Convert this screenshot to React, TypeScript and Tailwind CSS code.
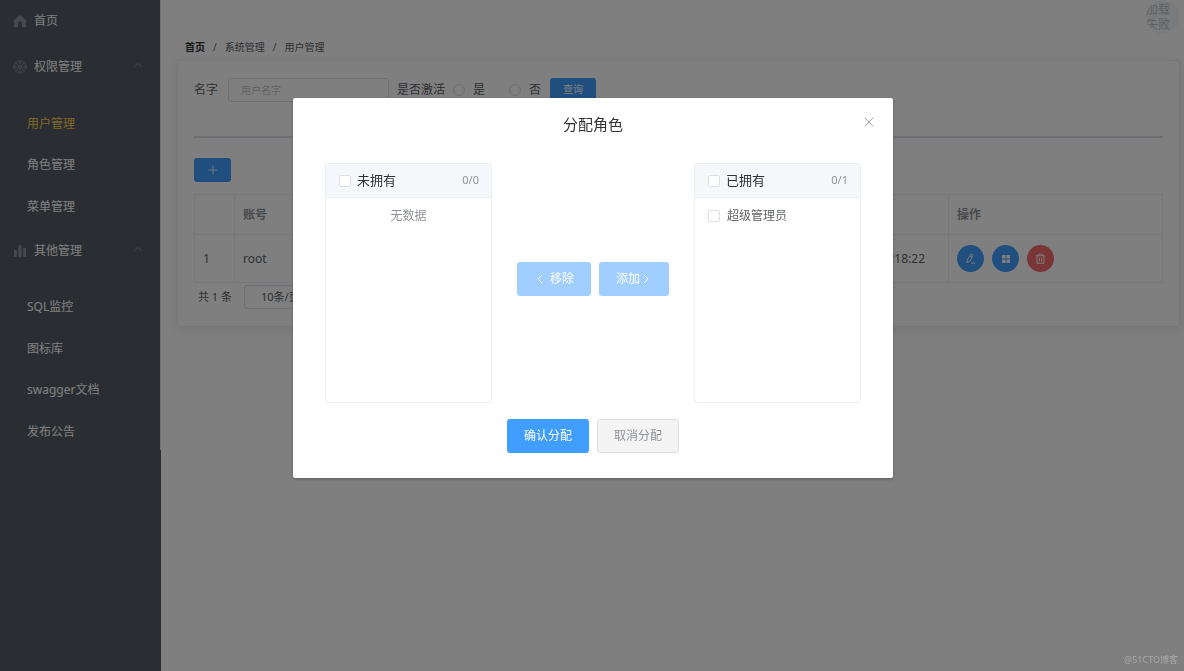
import React from "react";

const Home = () => (
  <svg viewBox="0 0 14 14" className="size-3.5 text-[#909399]" fill="currentColor">
    <path d="M7 1 1 6.2V12.5a.5.5 0 0 0 .5.5H5V9.2a2 2 0 0 1 4 0V13h3.500a.5.5 0 0 0 .5-.5V6.200z" />
  </svg>
);

const Wheel = () => (
  <svg viewBox="0 0 14 14" className="size-3.5 text-[#909399]" fill="none" stroke="currentColor" strokeWidth=".7">
    <circle cx="7" cy="7" r="6.300" />
    <circle cx="7" cy="7" r="4.800" strokeWidth=".4" />
    <circle cx="7" cy="7" r="1.300" />
    <path d="M7 .7v4.900M7 8.400v4.900M.7 7h4.900M8.400 7h4.900M2.500 2.500 6 6M8 8l3.500 3.500M11.500 2.500 8 6M6 8l-3.500 3.500" />
  </svg>
);

const Bars = () => (
  <svg viewBox="0 0 14 14" className="size-3.5 text-[#909399]" fill="currentColor">
    <path d="M1 6h2.800v7H1zM5.500 1.500h3V13h-3zM10.200 4H13v9h-2.800z" />
  </svg>
);

const Chevron = ({ d, className }: { d: string; className: string }) => (
  <svg viewBox="0 0 12 12" className={className} fill="none" stroke="currentColor" strokeLinecap="round" strokeLinejoin="round">
    <path d={d} />
  </svg>
);

function MenuGroup({ icon, title, items, active, listClass }: {
  icon: React.ReactNode; title: string; items: string[]; active?: string; listClass: string;
}) {
  return (
    <li>
      <button type="button" className="flex h-[46px] w-full items-center pl-[13px] pr-[17px]">
        {icon}
        <span className="ml-[7px] flex-1 text-left">{title}</span>
        <Chevron d="M2 8l4-4 4 4" className="mb-1 size-[10px] text-[#909399]" />
      </button>
      <ul className={listClass}>
        {items.map((t) => (
          <li key={t} className="flex items-center">
            <a href="#" className={t === active ? "pl-[27px] text-[#ffd04b]" : "pl-[27px]"}>{t}</a>
          </li>
        ))}
      </ul>
    </li>
  );
}

const boxClass = "size-3 shrink-0 appearance-none rounded-xs border border-[#dcdfe6] bg-white";
const radioClass = "size-3 shrink-0 appearance-none rounded-full border border-[#dcdfe6] bg-white";

function Panel({ id, title, count, children }: { id: string; title: string; count: string; children: React.ReactNode }) {
  return (
    <section className="h-60 w-[167px] overflow-hidden rounded-[3px] border border-[#ebeef5]">
      <header className="flex h-[34px] items-center border-b border-[#ebeef5] bg-[#f5f7fa] px-3">
        <input id={id} type="checkbox" className={boxClass + " ml-px"} />
        <label htmlFor={id} className="ml-1.5 flex-1 text-[13px] text-[#303133]">{title}</label>
        <span className="text-[11px] text-[#909399]">{count}</span>
      </header>
      {children}
    </section>
  );
}

const roundBtn = "flex size-[27px] items-center justify-center rounded-full text-white";

export default function App() {
  return (
    <div className="flex min-h-screen bg-white font-['Noto_Sans','Noto_Sans_CJK_SC',sans-serif] text-xs text-[#606266]">
      <aside className="w-[161px] shrink-0 bg-[#545c64] text-white">
        <ul className="h-[450px] border-r border-[#e6e6e6] pt-px">
          <li>
            <a href="#" className="flex h-[43px] items-center pb-[3px] pl-[13px]">
              <Home />
              <span className="ml-[7px]">首页</span>
            </a>
          </li>
          <MenuGroup icon={<Wheel />} title="权限管理" items={["用户管理", "角色管理", "菜单管理"]} active="用户管理" listClass="mt-[13px] grid h-[125px] grid-rows-3" />
          <MenuGroup icon={<Bars />} title="其他管理" items={["SQL监控", "图标库", "swagger文档", "发布公告"]} listClass="mt-3 grid h-[167px] grid-rows-4" />
        </ul>
      </aside>

      <div className="flex min-w-0 flex-1 flex-col pl-4 pr-1">
        <div className="flex h-[35px] justify-end">
          <div className="flex size-[34px] items-center overflow-hidden rounded-full bg-[#f5f7fa] leading-[15px] text-[#c0c4cc]">
            <span className="w-6">加载失败</span>
          </div>
        </div>
        <nav className="flex h-[25px] gap-2 pl-2 text-[10px] leading-6">
          <a href="#" className="font-bold text-[#303133]">首页</a>
          <span>/</span>
          <a href="#">系统管理</a>
          <span>/</span>
          <span>用户管理</span>
        </nav>

        <main className="rounded-[3px] border border-[#ebeef5] bg-white px-4 pb-[17px] pt-[17px] shadow-[0_2px_12px_rgba(0,0,0,0.1)]">
          <form className="flex h-6 items-center">
            <label htmlFor="name">名字</label>
            <input id="name" placeholder="用户名字" className="ml-[10px] h-6 w-[161px] rounded-[3px] border border-[#dcdfe6] px-3 text-[10px] placeholder:text-[#c0c4cc]" />
            <span className="ml-2">是否激活</span>
            <input id="yes" type="radio" name="on" className={radioClass + " ml-2"} />
            <label htmlFor="yes" className="ml-2">是</label>
            <input id="no" type="radio" name="on" className={radioClass + " ml-6"} />
            <label htmlFor="no" className="ml-2">否</label>
            <button type="button" className="ml-[9px] h-6 rounded-[3px] bg-[#409eff] px-[13px] text-[10px] text-white">查询</button>
          </form>
          <hr className="mt-[34px] border-t-2 border-[#dcdfe6]" />
          <button type="button" aria-label="新增" className="mt-5 flex h-6 w-[37px] items-center justify-center rounded-[3px] bg-[#409eff] text-white">
            <Chevron d="M6 1v10M1 6h10" className="size-[10px]" />
          </button>
          <table className="mt-3 w-full table-fixed border-collapse text-left [&_td]:border [&_td]:border-[#ebeef5] [&_td]:px-2 [&_th]:border [&_th]:border-[#ebeef5] [&_th]:px-2">
            <colgroup>
              <col className="w-10" />
              <col />
              <col className="w-[214px]" />
            </colgroup>
            <thead>
              <tr className="h-10 text-[#909399]">
                <th />
                <th>账号</th>
                <th>操作</th>
              </tr>
            </thead>
            <tbody>
              <tr className="h-12">
                <td>1</td>
                <td>
                  <div className="flex justify-between pr-[15px]">
                    <span>root</span>
                    <span>:18:22</span>
                  </div>
                </td>
                <td>
                  <div className="flex gap-2">
                    <button type="button" aria-label="编辑" className={roundBtn + " bg-[#409eff]"}>
                      <svg viewBox="0 0 12 12" className="size-[11px]" fill="none" stroke="currentColor" strokeLinejoin="round">
                        <path d="M6.500 1.200 9 2.700 5 9.200 2.200 10.500 2.400 7.700zM5.300 3.200l2.500 1.500M6.500 11H11" />
                      </svg>
                    </button>
                    <button type="button" aria-label="分配角色" className={roundBtn + " bg-[#409eff]"}>
                      <svg viewBox="0 0 10 10" className="size-[10px]" fill="currentColor">
                        <path d="M1 1h3.600v3.600H1zM5.400 1H9v3.600H5.400zM1 5.400h3.600V9H1zM5.400 5.400H9V9H5.400z" />
                      </svg>
                    </button>
                    <button type="button" aria-label="删除" className={roundBtn + " bg-[#f56c6c]"}>
                      <svg viewBox="0 0 12 12" className="size-[11px]" fill="none" stroke="currentColor">
                        <path d="M1 3h10M4 3V1.200h4V3M2.300 3v8.300h7.400V3M4.800 5v4.300M7.200 5v4.300" />
                      </svg>
                    </button>
                  </div>
                </td>
              </tr>
            </tbody>
          </table>
          <div className="flex items-center gap-3 pl-1 pt-0.5 text-[11px]">
            <span>共 1 条</span>
            <select aria-label="每页条数" className="h-6 w-[92px] appearance-none rounded-[3px] border border-[#dcdfe6] bg-white pl-4">
              <option>10条/页</option>
            </select>
          </div>
        </main>
      </div>

      <div className="fixed inset-0 flex items-start justify-center bg-black/50 pl-0.5 pt-[98px]">
        <div role="dialog" aria-modal="true" aria-labelledby="dialog-title" className="w-[600px] rounded-xs bg-white px-8 pb-[25px] shadow-[0_1px_3px_rgba(0,0,0,0.3)]">
          <div className="flex h-[65px] items-start pt-4">
            <span className="w-2" />
            <h2 id="dialog-title" className="flex-1 text-center text-[15px] leading-5 text-[#303133]">分配角色</h2>
            <button type="button" aria-label="关闭" className="-mr-6 flex h-4 w-8 items-center justify-center text-[#909399]">
              <Chevron d="M1 1l10 10M11 1 1 11" className="size-[10px]" />
            </button>
          </div>
          <div className="flex items-center justify-between">
            <Panel id="all-left" title="未拥有" count="0/0">
              <p className="pt-2 text-center leading-5 text-[#909399]">无数据</p>
            </Panel>
            <div className="mb-2 flex gap-2 text-white">
              <button type="button" className="flex h-[34px] w-[74px] items-center justify-center gap-1 rounded-[3px] bg-[#a0cfff]">
                <Chevron d="M8 2 4 6l4 4" className="size-3" />
                移除
              </button>
              <button type="button" className="flex h-[34px] w-[70px] items-center justify-center rounded-[3px] bg-[#a0cfff]">
                添加
                <Chevron d="M4 2l4 4-4 4" className="size-3" />
              </button>
            </div>
            <Panel id="all-right" title="已拥有" count="0/1">
              <div className="flex items-center pl-3 pt-2 leading-5">
                <input id="role-admin" type="checkbox" className={boxClass + " ml-px"} />
                <label htmlFor="role-admin" className="ml-[7px]">超级管理员</label>
              </div>
            </Panel>
          </div>
          <div className="mt-4 flex justify-center gap-2">
            <button type="button" className="h-[34px] w-[82px] rounded-[3px] bg-[#409eff] text-white">确认分配</button>
            <button type="button" className="h-[34px] w-[82px] rounded-[3px] border border-[#dcdfe6] bg-[#f4f4f5] text-[#909399]">取消分配</button>
          </div>
        </div>
      </div>
      <span className="fixed bottom-1 right-1.5 text-[9px] leading-[14px] text-[#a8a8a8]">@51CTO博客</span>
    </div>
  );
}
